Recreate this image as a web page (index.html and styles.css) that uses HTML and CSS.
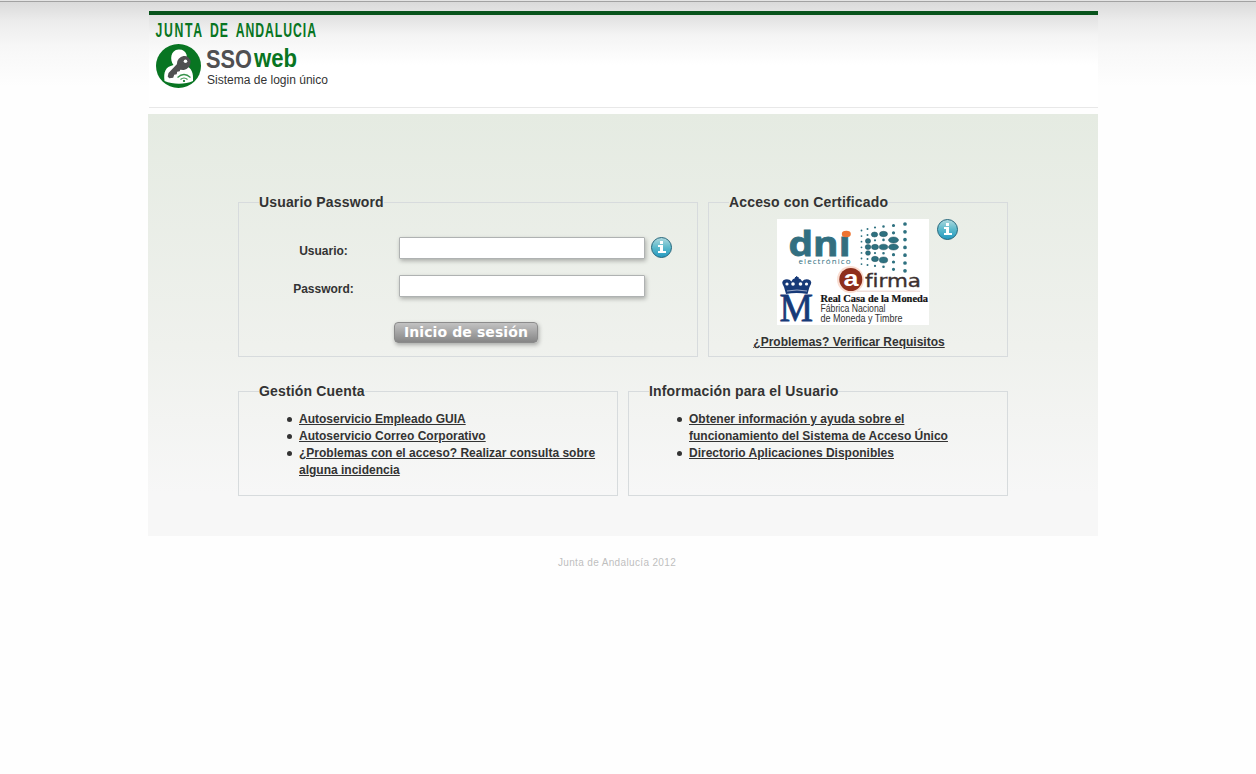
FILE: index.html
```html
<!DOCTYPE html>
<html lang="es">
<head>
<meta charset="utf-8">
<title>SSOweb - Sistema de login único</title>
<link rel="stylesheet" href="styles.css">
</head>
<body>
<div class="page">
  <header class="header">
    <svg class="brand" width="190" height="80" viewBox="150 15 190 80">
      <text class="junta" transform="translate(155.500 36.500) scale(.68 1.150)"><tspan x="0" textLength="68.500">JUNTA</tspan> <tspan x="80" textLength="26.500">DE</tspan> <tspan x="118" textLength="118">ANDALUCIA</tspan></text>
      <ellipse cx="178.500" cy="66" rx="22.500" ry="22" fill="#087522"/>
      <path d="M164.500 81c-1-9 .5-14 9-16-4-5-3-15 5-15.500 8.500-.5 10.500 8 6.500 15.500 7 3 8.500 8 8 16-8 3.500-20 3.500-28.500 0z" fill="#fff"/>
      <g fill="#505052">
        <ellipse cx="183.700" cy="63" rx="6.500" ry="7.300" transform="rotate(40 183.700 63)"/>
        <path d="M178 63l-9.500 10-.8 3.500 1.500 1.800 4-.5 1-3 2.500-.5.500-2.500 2.500-.5.500-1.500 5-1z"/>
      </g>
      <circle cx="185.500" cy="61.300" r="1.800" fill="#fff"/>
      <g fill="none" stroke="#35914a" stroke-width="1.200"><path d="M177.500 77.500q6.500-6 13 0M180.500 79.500q3.500-3 7 0"/></g>
      <circle cx="184" cy="81" r="1.100" fill="#087522"/>
      <text class="sso" x="206" y="68" textLength="46" lengthAdjust="spacingAndGlyphs">SSO</text>
      <text class="web" x="254" y="67" textLength="43" lengthAdjust="spacingAndGlyphs">web</text>
      <text class="tagline" x="207" y="84" textLength="121" lengthAdjust="spacingAndGlyphs">Sistema de login único</text>
    </svg>
  </header>

  <main class="panel">
    <div class="row">
      <fieldset class="box login">
        <legend>Usuario Password</legend>
        <form class="form">
          <div class="field">
            <label for="user">Usuario:</label>
            <input id="user" type="text">
            <svg class="info" width="22" height="22" viewBox="0 0 22 22">
              <defs><linearGradient id="blue" x2="0" y2="1"><stop stop-color="#b0dadf"/><stop offset=".5" stop-color="#5bb9cb"/><stop offset="1" stop-color="#2298c0"/></linearGradient></defs>
              <circle cx="10.500" cy="10.500" r="10" fill="url(#blue)" stroke="#27677c"/>
              <path d="M9 4h3v3H9zM7 8h5v6h3v2H7v-2h2v-4H7z" fill="#fff"/>
            </svg>
          </div>
          <div class="field">
            <label for="pass">Password:</label>
            <input id="pass" type="password">
          </div>
          <button class="submit" type="button">Inicio de sesión</button>
        </form>
      </fieldset>
      <fieldset class="box cert">
        <legend>Acceso con Certificado</legend>
        <div class="cert-logos">
          <svg class="logos" width="152" height="106" viewBox="777 219 152 106">
            <path fill="#fff" d="M777 219h152v106H777z"/>
            <text class="dni" x="788.500" y="256" textLength="62" lengthAdjust="spacingAndGlyphs">dnı</text>
            <ellipse cx="846.300" cy="234" rx="4.500" ry="3.200" fill="#ee7331"/>
            <text class="electronico" x="798.500" y="263.500" textLength="52" lengthAdjust="spacing">electrónico</text>
            <g fill="none" stroke="#2e7180" stroke-linecap="round">
              <path d="M861.500 230.500v34" stroke-width="1.800" stroke-dasharray="0 5.600"/>
              <path d="M867.500 229v38" stroke-width="2" stroke-dasharray="0 6"/>
              <path d="M875 227.500v40" stroke-width="2.200" stroke-dasharray="0 6.400"/>
              <path d="M883.500 226.500v41" stroke-width="2.600" stroke-dasharray="0 6.700"/>
              <path d="M893.500 225.500v46" stroke-width="3.200" stroke-dasharray="0 7.300"/>
              <path d="M905 224v48" stroke-width="3.700" stroke-dasharray="0 7.800"/>
            </g>
            <g fill="#2e7180" stroke="#20505c" stroke-width=".5">
              <ellipse cx="874.500" cy="234.500" rx="3.200" ry="2.500"/><ellipse cx="883.500" cy="234" rx="4" ry="2.700"/>
              <ellipse cx="868" cy="241" rx="2.600" ry="2.500"/><ellipse cx="893.500" cy="240" rx="5" ry="3"/>
              <ellipse cx="868" cy="247" rx="2.800" ry="2.500"/><ellipse cx="875" cy="247" rx="3.500" ry="2.700"/><ellipse cx="883.500" cy="247" rx="4.200" ry="2.800"/><ellipse cx="893.500" cy="247" rx="5" ry="3"/>
              <ellipse cx="868" cy="253" rx="2.500" ry="2.300"/><ellipse cx="875" cy="259" rx="3.500" ry="2.700"/><ellipse cx="883.500" cy="260" rx="4.200" ry="3"/>
            </g>
            <circle cx="850.500" cy="279.500" r="13.500" fill="#faddd1"/>
            <circle cx="850.800" cy="279.500" r="11.500" fill="#8e2e1b"/>
            <text class="a-mark" x="843.500" y="286" textLength="15" lengthAdjust="spacingAndGlyphs">a</text>
            <text class="firma" transform="translate(865 286.500) scale(1 .85)" textLength="56" lengthAdjust="spacingAndGlyphs">firma</text>
            <path d="M857 291.200h63" stroke="#efdeda" stroke-width="1.500"/>
            <g fill="#173a78">
              <path d="M784 287q-4-6 1-7.500 4-1 6.500 2 1-3 3.500-3h3.500q2.500 0 3.500 3 2.500-3 6.500-2 5 1.500 1 7.500l-2 7q-11-2-21.500 0z"/>
              <circle cx="796.700" cy="279" r="2.200"/>
              <text class="m-mark" transform="translate(779.500 321) scale(1 1.080)" textLength="33.500" lengthAdjust="spacingAndGlyphs">M</text>
            </g>
            <path d="M796.700 276v4M795 277.500h3.400" stroke="#173a78"/>
            <g fill="#fff"><circle cx="787" cy="284" r="1.600"/><circle cx="793" cy="284" r="1.800"/><circle cx="800.500" cy="284" r="1.800"/><circle cx="806.500" cy="284" r="1.600"/></g>
            <path d="M787 291q10-2 20 0" stroke="#9cabc9" fill="none"/>
            <text class="casa" x="820.500" y="302" textLength="107.500" lengthAdjust="spacingAndGlyphs">Real Casa de la Moneda</text>
            <text class="fabrica" x="820.500" y="312" textLength="65" lengthAdjust="spacingAndGlyphs">Fábrica Nacional</text>
            <text class="fabrica" x="820.500" y="322" textLength="82" lengthAdjust="spacingAndGlyphs">de Moneda y Timbre</text>
          </svg>
          <svg class="info" width="22" height="22" viewBox="0 0 22 22">
            <circle cx="11.500" cy="10.500" r="10" fill="url(#blue)" stroke="#27677c"/>
            <path d="M10 4h3v3h-3zM8 8h5v6h3v2H8v-2h2v-4H8z" fill="#fff"/>
          </svg>
        </div>
        <a class="requirements" href="#">¿Problemas? Verificar Requisitos</a>
      </fieldset>
    </div>
    <div class="row">
      <fieldset class="box links">
        <legend>Gestión Cuenta</legend>
        <ul>
          <li><a href="#">Autoservicio Empleado GUIA</a></li>
          <li><a href="#">Autoservicio Correo Corporativo</a></li>
          <li><a href="#">¿Problemas con el acceso? Realizar consulta sobre<br>alguna incidencia</a></li>
        </ul>
      </fieldset>
      <fieldset class="box links">
        <legend>Información para el Usuario</legend>
        <ul>
          <li><a href="#">Obtener información y ayuda sobre el<br>funcionamiento del Sistema de Acceso Único</a></li>
          <li><a href="#">Directorio Aplicaciones Disponibles</a></li>
        </ul>
      </fieldset>
    </div>
  </main>
  <footer class="footer">Junta de Andalucía 2012</footer>
</div>
</body>
</html>
```
FILE: styles.css
```css
* { box-sizing: border-box; }
html { height: 100%; background: #fefefe; }
body {
  margin: 0;
  min-height: 100%;
  font: bold 12px/17px "Liberation Sans", Arial, sans-serif;
  color: #333;
  border-top: 1px solid #e4e4e4;
  background: linear-gradient(#a2a2a2 0 1px, #dadada 1px, #ececec 20px, #f7f7f7 45px, #fefefe 85px);
}
.page { width: 950px; margin-left: 148px; padding-top: 10px; }
.header {
  height: 97px;
  margin-left: 1px;
  border-top: 4px solid #07531b;
  border-bottom: 1px solid #e8e8e8;
  background: linear-gradient(#e0e0e0, #f4f4f4 20px, #fff 50px);
}
.brand { display: block; margin-left: 1px; overflow: visible; }
.junta { font: bold 18px "Liberation Sans Narrow", "Liberation Sans", sans-serif; fill: #087522; }
.sso { font: bold 25px "Liberation Sans", sans-serif; fill: #505052; }
.web { font: bold 25px "Liberation Sans", sans-serif; fill: #087522; }
.tagline { font: 12px "Liberation Sans", sans-serif; fill: #333; }
.panel {
  margin-top: 6px;
  height: 422px;
  padding: 80px 90px 0;
  display: flex;
  flex-direction: column;
  gap: 26px;
  background: linear-gradient(#e5ebe2, #eff1ed 55%, #f7f7f7 90%);
}
.row { display: flex; gap: 10px; }
.box { min-width: 0; margin: 0; padding: 0 20px; border: 1px solid #d7dbdd; }
.box legend { padding: 0; font-size: 14px; line-height: 17px; letter-spacing: .16px; white-space: nowrap; }
.login { width: 460px; height: 163px; }
.cert { width: 300px; height: 163px; }
.links { width: 380px; height: 113px; }
.form { padding-top: 26px; }
.field { display: flex; height: 38px; align-items: flex-start; }
.field label { width: 129px; margin-right: 11px; padding-top: 6px; text-align: center; }
.field input {
  width: 246px;
  height: 22px;
  border: 1px solid #afb2b2;
  border-radius: 1px;
  background: #fff;
  box-shadow: 1px 2px 4px rgba(0, 0, 0, .28);
}
.field .info { margin-left: 6px; }
.submit {
  display: block;
  width: 144px;
  height: 21px;
  margin: 9px 0 0 135px;
  padding: 0;
  border: 1px solid #8b8b8b;
  border-radius: 4px;
  background: linear-gradient(#c2c2c2, #868686);
  box-shadow: 1px 2px 4px rgba(0, 0, 0, .3);
  color: #fff;
  font: bold 14px/17px "DejaVu Sans", sans-serif;
  letter-spacing: .1px;
  white-space: nowrap;
}
.cert-logos { display: flex; align-items: flex-start; padding: 8px 0 0 48px; gap: 7px; }
.logos { display: block; flex: none; }
.dni { font: bold 34px "Open Sans", sans-serif; fill: #326f80; stroke: #326f80; stroke-width: .8px; }
.electronico { font: 8px "Open Sans", sans-serif; fill: #326f80; }
.a-mark { font: bold 22px "Liberation Sans", sans-serif; fill: #fff; }
.firma { font: 20px "DejaVu Sans", sans-serif; fill: #3c3030; stroke: #3c3030; stroke-width: .4px; }
.m-mark { font: 38px "Liberation Serif", serif; stroke: #173a78; stroke-width: .7px; }
.casa { font: bold 9.5px "Liberation Serif", serif; fill: #111; stroke: #111; stroke-width: .2px; }
.fabrica { font: 10px "Liberation Sans", sans-serif; fill: #333; }
.requirements { display: block; width: 240px; margin-top: 9px; text-align: center; white-space: nowrap; }
a { color: #333; text-decoration: underline; text-underline-offset: 1px; }
.links ul { margin: 11px 0 0; padding-left: 40px; white-space: nowrap; list-style: none; }
.links li { position: relative; }
.links li::before {
  content: "";
  position: absolute;
  left: -12px;
  top: 6px;
  width: 5px;
  height: 5px;
  border-radius: 50%;
  background: #333;
}
.footer { padding: 18px 12px 0 0; text-align: center; font-size: 10px; font-weight: normal; letter-spacing: .35px; color: #bfbfbf; }
```
